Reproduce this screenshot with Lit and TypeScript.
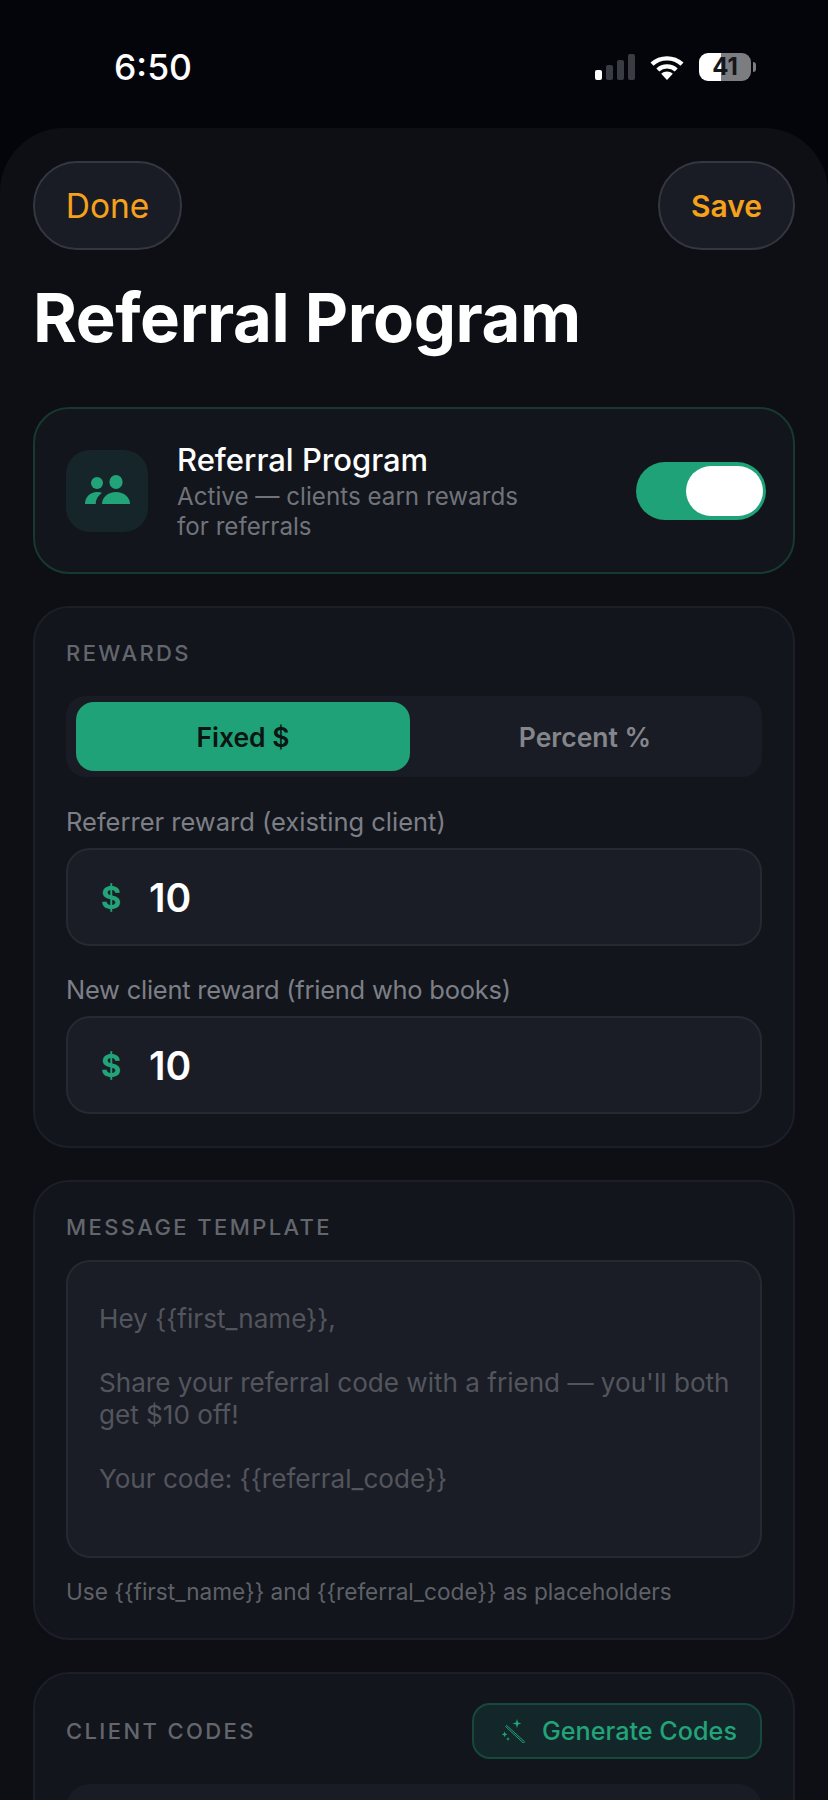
import { LitElement, css, html } from 'lit';
import { customElement } from 'lit/decorators.js';

const signalIcon = html`<svg class="signal" width="40" height="26" viewBox="0 0 40 26">
  <rect x="0" y="16" width="7" height="10" rx="2" fill="#fff"/>
  <rect x="11" y="11" width="7" height="15" rx="2" fill="#3a3c44"/>
  <rect x="22" y="6" width="7" height="20" rx="2" fill="#3a3c44"/>
  <rect x="33" y="0" width="7" height="26" rx="2" fill="#3a3c44"/>
</svg>`;

const wifiIcon = html`<svg class="wifi" width="34" height="25" viewBox="0 0 34 25" fill="none">
  <path d="M2 9.2C10.4 1.4 23.6 1.4 32 9.2" stroke="#fff" stroke-width="4.4"/>
  <path d="M7.8 15C13 10.2 21 10.2 26.2 15" stroke="#fff" stroke-width="4.4"/>
  <path d="M17 25L11.2 18.8C14.6 15.8 19.4 15.8 22.8 18.8Z" fill="#fff"/>
</svg>`;

const peopleIcon = html`<svg class="people" width="45" height="29" viewBox="0 0 45 29" fill="#22a378">
  <circle cx="12" cy="8" r="6"/>
  <ellipse cx="31" cy="7" rx="6.6" ry="7"/>
  <path d="M0 29C0 22 5 17 12 17C14 17 15.5 17.4 17 18C13 20.5 10.8 24.5 10.8 29Z"/>
  <path d="M17 29C17 22 23 17 31 17C39 17 45 22 45 29Z"/>
</svg>`;

const wandIcon = html`<svg width="24" height="24" viewBox="0 0 24 24" fill="none">
  <path d="M4.6 6.4L22.6 22.8L21.4 24L3.6 7.6Z" stroke="#22a378" stroke-width="1"/>
  <path d="M15 0L16.1 3.4L19.5 4.5L16.1 5.6L15 9L13.9 5.6L10.5 4.5L13.9 3.4Z" fill="#22a378"/>
  <path d="M2.6 12.6L3.4 14.6L5.4 15.4L3.4 16.2L2.6 18.2L1.8 16.2L-0.2 15.4L1.8 14.6Z" fill="#22a378"/>
  <path d="M6 18L6.6 19.4L8 20L6.6 20.6L6 22L5.4 20.6L4 20L5.4 19.4Z" fill="#22a378"/>
</svg>`;

@customElement('app-root')
export class AppRoot extends LitElement {
  static styles = css`
    :host {
      display: block;
      width: 828px;
      height: 1800px;
      overflow: hidden;
      background: #04050a;
      font-family: Inter, "Noto Sans", sans-serif;
      color: #fff;
    }
    .status {
      height: 128px;
      box-sizing: border-box;
      padding: 52px 72px 0 114px;
      display: flex;
      justify-content: space-between;
      align-items: flex-start;
    }
    .time {
      font-size: 35.5px;
      font-weight: 500;
      line-height: 32px;
    }
    .indicators {
      display: flex;
      align-items: flex-start;
      padding-top: 1px;
    }
    .signal { margin-top: 1px; margin-right: 15px; }
    .wifi { margin-top: 2px; margin-right: 15px; }
    .battery {
      width: 52px;
      height: 28px;
      border-radius: 9px;
      background: linear-gradient(90deg, #fff 0 42%, #7c7d80 42% 100%);
      color: #15161b;
      font-size: 24px;
      font-weight: 700;
      line-height: 28px;
      text-align: center;
    }
    .nub {
      width: 3px;
      height: 10px;
      margin: 9px 0 0 2px;
      background: #7c7d80;
      border-radius: 0 3px 3px 0;
    }
    .sheet {
      background: #0d0f14;
      border-radius: 64px 64px 0 0;
      padding: 33px 33px 0;
      height: 1672px;
      box-sizing: border-box;
    }
    .top {
      display: flex;
      justify-content: space-between;
    }
    .pill {
      height: 89px;
      box-sizing: border-box;
      border: 2px solid #34373f;
      border-radius: 44px;
      background: #191c25;
      color: #f5a11c;
      display: flex;
      align-items: center;
      justify-content: center;
    }
    .done { width: 149px; font-size: 33.5px; font-weight: 400; }
    .save { width: 137px; font-size: 30px; font-weight: 600; }
    h1 {
      margin: 28px 0 49px;
      font-size: 67px;
      line-height: 80px;
      font-weight: 700;
      letter-spacing: -0.4px;
    }
    .card {
      background: #12151c;
      border: 2px solid #1c1f28;
      border-radius: 36px;
      box-sizing: border-box;
      padding: 32px 31px;
      margin-bottom: 32px;
    }
    .program {
      height: 167px;
      border-color: #17392f;
      display: flex;
      align-items: center;
      padding: 0 27px 0 31px;
    }
    .icon-box {
      width: 82px;
      height: 82px;
      border-radius: 24px;
      background: #15252a;
      display: flex;
      align-items: center;
      justify-content: center;
      flex: none;
    }
    .people { margin-bottom: 3px; }
    .program-text {
      margin-left: 29px;
      padding-top: 2px;
      flex: 1;
    }
    .program-title {
      font-size: 31px;
      font-weight: 500;
      line-height: 36px;
    }
    .program-sub {
      margin-top: 4px;
      width: 360px;
      font-size: 24.2px;
      line-height: 30px;
      color: #71737a;
    }
    .toggle {
      width: 130px;
      height: 58px;
      border-radius: 29px;
      background: #1fa277;
      display: flex;
      justify-content: flex-end;
      align-items: center;
      padding-right: 3px;
      box-sizing: border-box;
      flex: none;
    }
    .thumb {
      width: 77px;
      height: 50px;
      border-radius: 25px;
      background: #fff;
    }
    .section-label {
      font-size: 22px;
      font-weight: 500;
      line-height: 26px;
      letter-spacing: 2.4px;
      color: #64666d;
    }
    .segment {
      margin-top: 30px;
      height: 81px;
      border-radius: 20px;
      background: #191c25;
      padding: 6px 10px;
      box-sizing: border-box;
      display: flex;
      gap: 8px;
    }
    .segment div {
      flex: 1;
      display: flex;
      align-items: center;
      justify-content: center;
      border-radius: 18px;
      font-size: 26.5px;
      font-weight: 600;
      color: #84868c;
    }
    .segment .active {
      background: #1fa277;
      color: #0b1512;
    }
    .field-label {
      margin-top: 30px;
      font-size: 25.5px;
      line-height: 30px;
      color: #7d7f86;
    }
    .field-label.second {
      margin-top: 29px;
      letter-spacing: -0.25px;
    }
    .input {
      margin-top: 11px;
      height: 98px;
      box-sizing: border-box;
      background: #1a1d26;
      border: 2px solid #262932;
      border-radius: 24px;
      display: flex;
      align-items: center;
      padding-left: 33px;
    }
    .dollar {
      width: 48px;
      font-size: 31px;
      font-weight: 700;
      color: #22a378;
    }
    .value {
      font-size: 39px;
      font-weight: 600;
    }
    .textarea {
      margin-top: 20px;
      height: 298px;
      box-sizing: border-box;
      background: #1a1d26;
      border: 2px solid #262932;
      border-radius: 24px;
      padding: 41px 24px 0 31px;
      font-size: 26.1px;
      line-height: 32px;
      color: #53555d;
      white-space: pre-wrap;
    }
    .hint {
      margin-top: 20px;
      font-size: 22.6px;
      line-height: 28px;
      color: #5f6168;
    }
    .codes { padding-top: 29px; }
    .codes-head {
      display: flex;
      justify-content: space-between;
      align-items: center;
    }
    .generate {
      width: 290px;
      height: 56px;
      box-sizing: border-box;
      border: 2px solid #17483c;
      border-radius: 18px;
      background: #13272a;
      color: #22a378;
      display: flex;
      align-items: center;
      padding-left: 28px;
      gap: 16px;
      font-size: 25.2px;
      font-weight: 500;
    }
    .code-row {
      margin-top: 25px;
      height: 120px;
      border-radius: 24px 24px 0 0;
      background: #191c25;
    }
  `;

  render() {
    return html`
      <div class="status">
        <div class="time">6:50</div>
        <div class="indicators">
          ${signalIcon}${wifiIcon}
          <div class="battery">41</div>
          <div class="nub"></div>
        </div>
      </div>
      <div class="sheet">
        <div class="top">
          <div class="pill done">Done</div>
          <div class="pill save">Save</div>
        </div>
        <h1>Referral Program</h1>

        <div class="card program">
          <div class="icon-box">${peopleIcon}</div>
          <div class="program-text">
            <div class="program-title">Referral Program</div>
            <div class="program-sub">Active — clients earn rewards for referrals</div>
          </div>
          <div class="toggle"><div class="thumb"></div></div>
        </div>

        <div class="card">
          <div class="section-label">REWARDS</div>
          <div class="segment">
            <div class="active">Fixed $</div>
            <div>Percent %</div>
          </div>
          <div class="field-label">Referrer reward (existing client)</div>
          <div class="input"><span class="dollar">$</span><span class="value">10</span></div>
          <div class="field-label second">New client reward (friend who books)</div>
          <div class="input"><span class="dollar">$</span><span class="value">10</span></div>
        </div>

        <div class="card">
          <div class="section-label">MESSAGE TEMPLATE</div>
          <div class="textarea">Hey {{first_name}},

Share your referral code with a friend — you'll both get $10 off!

Your code: {{referral_code}}</div>
          <div class="hint">Use {{first_name}} and {{referral_code}} as placeholders</div>
        </div>

        <div class="card codes">
          <div class="codes-head">
            <div class="section-label">CLIENT CODES</div>
            <div class="generate">${wandIcon}<span>Generate Codes</span></div>
          </div>
          <div class="code-row"></div>
        </div>
      </div>
    `;
  }
}
